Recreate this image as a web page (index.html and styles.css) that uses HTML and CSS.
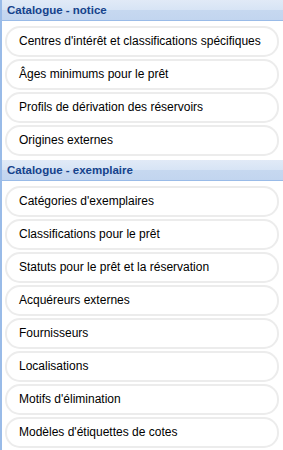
FILE: index.html
```html
<!DOCTYPE html>
<html lang="fr">
<head>
    <meta charset="UTF-8">
    <meta name="viewport" content="width=device-width, initial-scale=1.0">
    <title>Paramètres</title>
    <link rel="stylesheet" href="styles.css">
</head>
<body>
    <div class="panel">
        <div class="section-header">Catalogue - notice</div>
        <ul class="menu">
            <li class="menu-item">Centres d'intérêt et classifications spécifiques</li>
            <li class="menu-item">Âges minimums pour le prêt</li>
            <li class="menu-item">Profils de dérivation des réservoirs</li>
            <li class="menu-item">Origines externes</li>
        </ul>

        <div class="section-header">Catalogue - exemplaire</div>
        <ul class="menu">
            <li class="menu-item">Catégories d'exemplaires</li>
            <li class="menu-item">Classifications pour le prêt</li>
            <li class="menu-item">Statuts pour le prêt et la réservation</li>
            <li class="menu-item">Acquéreurs externes</li>
            <li class="menu-item">Fournisseurs</li>
            <li class="menu-item">Localisations</li>
            <li class="menu-item">Motifs d'élimination</li>
            <li class="menu-item">Modèles d'étiquettes de cotes</li>
        </ul>
    </div>
</body>
</html>
```

FILE: styles.css
```css
/* Page */
body {
    margin: 0;
    background-color: #fff;
    font-family: 'Liberation Sans', Arial, sans-serif;
    overflow: hidden;
}

/* Panel with the blue left edge */
.panel {
    border-left: 2px solid #99bbe8;
    min-height: 450px;
    box-sizing: border-box;
}

/* Section title bars */
.section-header {
    height: 20px;
    line-height: 21px;
    padding-left: 5px;
    font-size: 11.5px;
    font-weight: bold;
    color: #15428b;
    background: linear-gradient(to bottom, #e1eaf7 0%, #d7e4f5 50%, #c6d8f0 51%, #c2d5ef 100%);
    border-bottom: 1px solid #99bbe8;
}

/* List of links */
.menu {
    list-style: none;
    margin: 0;
    padding: 5px 4px 4px 3px;
    display: flex;
    flex-direction: column;
    gap: 2px;
}

.menu-item {
    height: 31px;
    box-sizing: border-box;
    border: 2px solid #ececec;
    border-radius: 15px;
    padding-left: 12px;
    line-height: 27px;
    font-size: 12px;
    color: #000;
    white-space: nowrap;
    cursor: pointer;
}
```
